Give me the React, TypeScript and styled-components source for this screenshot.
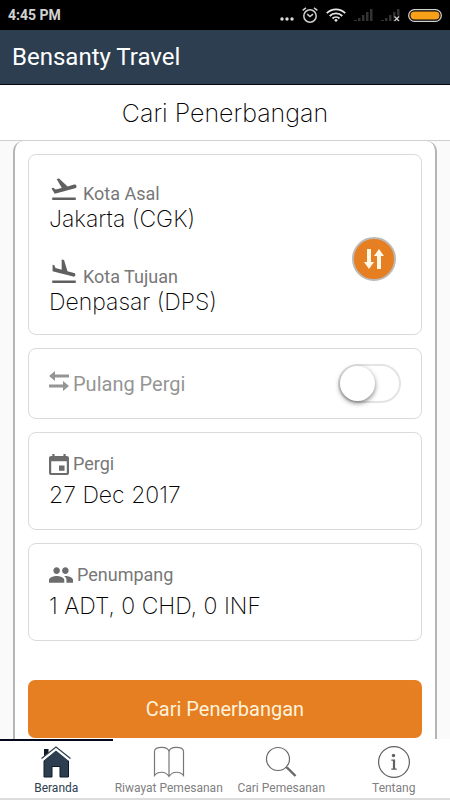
import React, { useState } from "react";
import styled, { createGlobalStyle } from "styled-components";

const GlobalStyle = createGlobalStyle`
  *, *::before, *::after { box-sizing: border-box; }
  body { margin: 0; background: #fafafa; font-family: Roboto, sans-serif; color: #000; }
  button { font: inherit; color: inherit; cursor: pointer; }
  svg { display: block; flex: none; }
`;

const Screen = styled.div`
  display: flex;
  flex-direction: column;
  height: 100vh;
`;

const StatusBar = styled.div`
  display: flex;
  align-items: center;
  justify-content: space-between;
  flex: none;
  height: 30px;
  padding: 0 8px;
  background: #000;
  color: #d2d2d2;
  font-size: 14px;
  font-weight: 700;
`;

const StatusIcons = styled.div`
  display: flex;
  align-items: center;
  gap: 8px;
`;

const AppBar = styled.header`
  flex: none;
  padding: 12px;
  background: #2c3e50;
  border-bottom: 1px solid #05080c;
  color: #fff;
  font-size: 24px;
  line-height: 30px;
`;

const PageTitle = styled.h1`
  flex: none;
  margin: 0;
  padding: 13px 16px 11px;
  background: #fff;
  border-bottom: 1px solid #d0d0d0;
  font-family: Inter, sans-serif;
  font-size: 25px;
  font-weight: 200;
  line-height: 31px;
  text-align: center;
`;

const Content = styled.main`
  flex: 1;
  min-height: 0;
  overflow-y: auto;
  scrollbar-width: none;
  padding: 0 13px 13px;
`;

const Panel = styled.form`
  display: flex;
  flex-direction: column;
  gap: 13px;
  padding: 13px 13px 32px;
  background: #fff;
  border: 2px solid #b5b5b5;
  border-top-width: 0;
  border-radius: 10px;
`;

const Card = styled.section`
  display: flex;
  align-items: center;
  justify-content: space-between;
  padding: 19px 20px;
  border: 1px solid #dadada;
  border-radius: 8px;
`;

const RouteFields = styled.div`
  display: flex;
  flex-direction: column;
  gap: 25px;
`;

const Field = styled.button<{ $gap?: number }>`
  display: flex;
  flex-direction: column;
  gap: ${(p) => p.$gap ?? 0}px;
  padding: 0;
  border: 0;
  background: none;
  text-align: left;
`;

const Label = styled.span<{ $muted?: boolean; $baseline?: boolean }>`
  display: flex;
  align-items: ${(p) => (p.$baseline ? "baseline" : "center")};
  gap: 4px;
  color: ${(p) => (p.$muted ? "#959595" : "#777")};
  font-size: ${(p) => (p.$muted ? 20 : 18)}px;
  line-height: 24px;
`;

const Value = styled.span<{ $tight?: boolean }>`
  font-family: Inter, sans-serif;
  font-size: 23px;
  font-weight: 200;
  line-height: ${(p) => (p.$tight ? 26 : 30)}px;
`;

const SwapButton = styled.button`
  display: grid;
  place-items: center;
  width: 44px;
  height: 44px;
  margin: 28px 5px 0 0;
  padding: 0;
  border: 2px solid #bdb9b4;
  border-radius: 50%;
  background: #e67e22;
`;

const Switch = styled.input`
  appearance: none;
  width: 63px;
  height: 39px;
  margin: -4px 0;
  border: 2px solid #e4e4e4;
  border-radius: 20px;
  background: #fff;
  cursor: pointer;

  &::before {
    content: "";
    display: block;
    width: 35px;
    height: 35px;
    border-radius: 50%;
    background: #fff;
    box-shadow: 0 2px 5px rgba(0, 0, 0, 0.5);
    transition: margin 0.2s;
  }
  &:checked { background: #e67e22; }
  &:checked::before { margin-left: 24px; }
`;

const SubmitButton = styled.button`
  margin-top: 26px;
  padding: 17px;
  border: 0;
  border-radius: 7px;
  background: #e67e22;
  color: #fff3dc;
  font-size: 20px;
  line-height: 24px;
`;

const TabBar = styled.nav`
  display: grid;
  grid-template-columns: repeat(4, minmax(0, 1fr));
  flex: none;
  background: #fff;
  border-bottom: 2px solid #dcdcdc;
`;

const Tab = styled.a<{ $active?: boolean }>`
  display: flex;
  flex-direction: column;
  align-items: center;
  gap: 3px;
  padding: 5px 0 2px;
  border-top: 2px solid ${(p) => (p.$active ? "#05081c" : "transparent")};
  color: ${(p) => (p.$active ? "#2c3e50" : "#808080")};
  font-size: 12px;
  line-height: 15px;
  text-decoration: none;
  white-space: nowrap;
`;

const TakeoffIcon = () => (
  <svg width="30" height="26" viewBox="0 0 24 21" fill="#606060" aria-hidden="true">
    <path d="M2.5 19h19v2h-19zm19.57-9.36c-.21-.8-1.04-1.28-1.84-1.06L14.92 10l-6.9-6.43-1.93.51 4.14 7.17-4.97 1.33-1.97-1.54-1.45.39 1.82 3.16.77 1.33 1.6-.43 5.31-1.42 4.35-1.16L21 11.49c.81-.23 1.28-1.05 1.07-1.85z" />
  </svg>
);

const LandingIcon = () => (
  <svg width="30" height="26" viewBox="0 0 24 21" fill="#606060" aria-hidden="true">
    <path d="M2.5 19h19v2h-19zm7.18-5.73l4.35 1.16 5.31 1.42c.8.21 1.62-.26 1.84-1.06.21-.8-.26-1.62-1.06-1.84l-5.31-1.42-2.76-9.02L10.12 2v8.28L5.15 8.95l-.93-2.32-1.45-.39v5.17l1.6.43 5.31 1.43z" />
  </svg>
);

const RoundTripIcon = () => (
  <svg width="20" height="20" viewBox="0 0 20 20" fill="#959595" aria-hidden="true">
    <path d="M0 5 6 0v3.5h14v3H6V10zM20 15l-6-5v3.5H0v3h14V20z" />
  </svg>
);

const CalendarIcon = () => (
  <svg width="20" height="21" viewBox="3 1 18 20" preserveAspectRatio="none" fill="#6c6c6c" aria-hidden="true">
    <path d="M17 12h-5v5h5v-5zM16 1v2H8V1H6v2H5c-1.11 0-1.99.9-1.99 2L3 19c0 1.1.89 2 2 2h14c1.1 0 2-.9 2-2V5c0-1.1-.9-2-2-2h-1V1h-2zm3 18H5V8h14v11z" />
  </svg>
);

const PeopleIcon = () => (
  <svg width="24" height="16" viewBox="1 5 22 14" fill="#6c6c6c" aria-hidden="true">
    <path d="M16 11c1.66 0 2.99-1.34 2.99-3S17.66 5 16 5c-1.66 0-3 1.34-3 3s1.34 3 3 3zm-8 0c1.66 0 2.99-1.34 2.99-3S9.66 5 8 5C6.34 5 5 6.34 5 8s1.34 3 3 3zm0 2c-2.33 0-7 1.17-7 3.5V19h14v-2.5c0-2.33-4.67-3.5-7-3.5zm8 0c-.29 0-.62.02-.97.05 1.16.84 1.97 1.97 1.97 3.45V19h6v-2.5c0-2.33-4.67-3.5-7-3.5z" />
  </svg>
);

const SwapIcon = () => (
  <svg width="20" height="20" viewBox="0 0 20 20" fill="#fff8e6" aria-hidden="true">
    <path d="M3 0h4v13h3l-5 7-5-7h3zM13 20h4V7h3l-5-7-5 7h3z" />
  </svg>
);

const DotsIcon = () => (
  <svg width="14" height="14" viewBox="0 0 14 14" fill="#dcdcdc" aria-hidden="true">
    <circle cx="2" cy="11" r="1.7" />
    <circle cx="7" cy="11" r="1.7" />
    <circle cx="12" cy="11" r="1.7" />
  </svg>
);

const AlarmIcon = () => (
  <svg width="16" height="16" viewBox="0 0 16 16" fill="none" stroke="#cfcfcf" strokeWidth="1.5" aria-hidden="true">
    <circle cx="8" cy="9" r="6.2" />
    <path d="m5.2 7.2 2.8 2.3 3-2.3M.6 3.4 4 .8M15.4 3.4 12 .8" />
  </svg>
);

const WifiIcon = () => (
  <svg width="20" height="14" viewBox="0 0 20 14" fill="none" stroke="#e6e6e6" strokeWidth="1.8" aria-hidden="true">
    <path d="M.8 5.2a13 13 0 0 1 18.4 0M3.7 8a9 9 0 0 1 12.6 0M6.5 10.5a5 5 0 0 1 7 0" />
    <circle cx="10" cy="12.3" r="1.4" fill="#e6e6e6" stroke="none" />
  </svg>
);

const SignalIcon = ({ missing }: { missing?: boolean }) => (
  <svg width="19" height="14" viewBox="0 0 19 14" aria-hidden="true">
    <path fill="#333" d="M0 12h3v1H0zM4 10h2.5v3H4zM8 7h2.5v6H8zM12 4h2.5v9H12zM16 1h2.5v12H16z" />
    {missing && <path d="m13.5 8.5 4.5 4.5m0-4.500-4.500 4.500" stroke="#000" strokeWidth="4" />}
    {missing && <path d="m13.5 8.5 4.5 4.5m0-4.500-4.500 4.500" stroke="#cfcfcf" strokeWidth="1.4" />}
  </svg>
);

const BatteryIcon = () => (
  <svg width="34" height="13" viewBox="0 0 34 13" aria-hidden="true">
    <rect x=".7" y=".7" width="32.6" height="11.6" rx="5.8" fill="none" stroke="#cfcfcf" strokeWidth="1.3" />
    <rect x="2.5" y="2.5" width="29" height="8" rx="4" fill="#f9a01b" />
  </svg>
);

const HomeIcon = () => (
  <svg width="32" height="32" viewBox="0 0 32 32" aria-hidden="true">
    <path d="M4 3h4.500v5L4 12z" fill="#101a26" />
    <path d="M4 14.500 16 4l12.500 10.500V31H20V20.500h-8V31H4z" fill="#2c3e50" stroke="#101a26" />
    <path d="M2.500 13.500 16 2.500l13.500 11" fill="none" stroke="#fff" strokeWidth="3" />
    <path d="M1.500 12.500 16 1l14.500 11.500" fill="none" stroke="#2c3e50" strokeWidth="1.2" />
  </svg>
);

const BookIcon = () => (
  <svg width="32" height="32" viewBox="0 0 32 32" fill="none" stroke="#777" strokeWidth="1.2" aria-hidden="true">
    <path d="M16 5.500C15 0 2.500 0 1.500 5v24.500c3.500-4.500 11-4.500 14.500 1 3.500-5.500 11-5.500 14.500-1V5C29.500 0 17 0 16 5.500zV30" />
  </svg>
);

const SearchIcon = () => (
  <svg width="32" height="32" viewBox="0 0 32 32" fill="none" stroke="#686868" aria-hidden="true">
    <circle cx="13" cy="13" r="11.500" strokeWidth="1.2" />
    <path d="m21 21 2 2" strokeWidth="1.5" />
    <path d="m22 21.500 8.500 8.500" strokeWidth="2.400" />
  </svg>
);

const InfoIcon = () => (
  <svg width="34" height="32" viewBox="0 0 34 32" aria-hidden="true">
    <circle cx="17" cy="16" r="15.400" fill="none" stroke="#606060" strokeWidth="1.2" />
    <circle cx="16.500" cy="9.500" r="1.700" fill="#606060" />
    <path d="M14.300 13.500h3.800v9h1.700v1.200h-5.500v-1.200h1.600v-7.800h-1.600z" fill="#606060" />
  </svg>
);

const tabs = [
  { label: "Beranda", Icon: HomeIcon },
  { label: "Riwayat Pemesanan", Icon: BookIcon },
  { label: "Cari Pemesanan", Icon: SearchIcon },
  { label: "Tentang", Icon: InfoIcon },
];

export default function App() {
  const [cities, setCities] = useState(["Jakarta (CGK)", "Denpasar (DPS)"]);
  const [roundTrip, setRoundTrip] = useState(false);
  const [tab, setTab] = useState("Beranda");

  return (
    <Screen>
      <GlobalStyle />
      <StatusBar>
        <span>4:45 PM</span>
        <StatusIcons>
          <DotsIcon />
          <AlarmIcon />
          <WifiIcon />
          <SignalIcon />
          <SignalIcon missing />
          <BatteryIcon />
        </StatusIcons>
      </StatusBar>
      <AppBar>Bensanty Travel</AppBar>
      <PageTitle>Cari Penerbangan</PageTitle>
      <Content>
        <Panel onSubmit={(e) => e.preventDefault()}>
          <Card>
            <RouteFields>
              <Field type="button">
                <Label $baseline><TakeoffIcon />Kota Asal</Label>
                <Value $tight>{cities[0]}</Value>
              </Field>
              <Field type="button">
                <Label $baseline><LandingIcon />Kota Tujuan</Label>
                <Value $tight>{cities[1]}</Value>
              </Field>
            </RouteFields>
            <SwapButton type="button" aria-label="Tukar kota" onClick={() => setCities([cities[1], cities[0]])}>
              <SwapIcon />
            </SwapButton>
          </Card>
          <Card>
            <Label as="label" htmlFor="round-trip" $muted $baseline>
              <RoundTripIcon />Pulang Pergi
            </Label>
            <Switch
              id="round-trip"
              type="checkbox"
              role="switch"
              checked={roundTrip}
              onChange={(e) => setRoundTrip(e.target.checked)}
            />
          </Card>
          <Card>
            <Field type="button" $gap={4}>
              <Label><CalendarIcon />Pergi</Label>
              <Value>27 Dec 2017</Value>
            </Field>
          </Card>
          <Card>
            <Field type="button" $gap={4}>
              <Label><PeopleIcon />Penumpang</Label>
              <Value>1 ADT, 0 CHD, 0 INF</Value>
            </Field>
          </Card>
          <SubmitButton type="submit">Cari Penerbangan</SubmitButton>
        </Panel>
      </Content>
      <TabBar>
        {tabs.map(({ label, Icon }) => (
          <Tab key={label} href="#" $active={tab === label} onClick={() => setTab(label)}>
            <Icon />
            {label}
          </Tab>
        ))}
      </TabBar>
    </Screen>
  );
}
